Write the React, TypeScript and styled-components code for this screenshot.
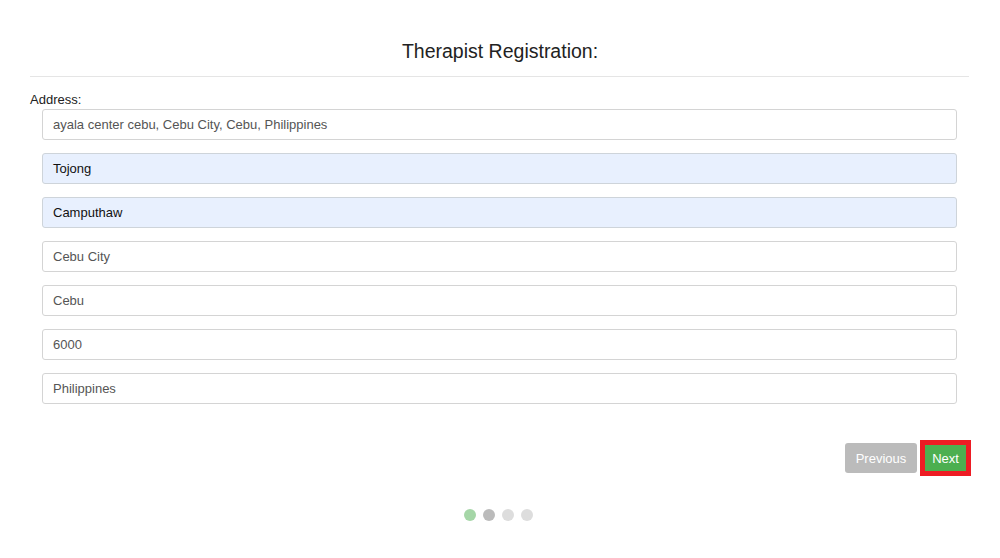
import React from "react";
import styled, { createGlobalStyle } from "styled-components";

const Global = createGlobalStyle`
  html, body { margin: 0; padding: 0; background: #fff; }
  body { font-family: "Liberation Sans", Arial, sans-serif; color: #222; }
  * { box-sizing: border-box; }
`;

const Page = styled.div`
  width: 1000px;
  height: 558px;
  padding: 38px 31px 0 30px;
  display: flex;
  flex-direction: column;
`;

const Title = styled.h1`
  margin: 0;
  font-size: 19.5px;
  font-weight: normal;
  text-align: center;
  color: #222;
  line-height: 26px;
  padding-left: 1px;
`;

const Rule = styled.div`
  height: 1px;
  background: #e5e5e5;
  margin-top: 12px;
`;

const Label = styled.div`
  font-size: 13px;
  margin-top: 14px;
  line-height: 17px;
  color: #222;
`;

const Fields = styled.div`
  display: flex;
  flex-direction: column;
  gap: 13px;
  padding: 0 12px;
  margin-top: 1px;
`;

const Field = styled.div<{ $filled?: boolean }>`
  height: 31px;
  border: 1px solid ${(p) => (p.$filled ? "#ced4da" : "#d4d4d4")};
  border-radius: 3px;
  background: ${(p) => (p.$filled ? "#e8f0fe" : "#fff")};
  padding: 0 10px;
  display: flex;
  align-items: center;
  font-size: 13px;
  color: ${(p) => (p.$filled ? "#111" : "#555")};
`;

const Actions = styled.div`
  display: flex;
  justify-content: flex-end;
  align-items: center;
  gap: 3px;
  margin-top: 36px;
  margin-right: -2px;
`;

const Button = styled.button<{ $variant: "prev" | "next" }>`
  font-family: "Liberation Sans", Arial, sans-serif;
  font-size: 13px;
  color: #fff;
  cursor: pointer;
  ${(p) =>
    p.$variant === "prev"
      ? `
    background: #bbbbbb;
    border: none;
    border-radius: 3px;
    width: 72px;
    height: 30px;
  `
      : `
    background: #4caf50;
    border: 5px solid #ed1c24;
    border-radius: 0;
    width: 51px;
    height: 36px;
    padding: 0;
  `}
`;

const Dots = styled.div`
  display: flex;
  justify-content: center;
  gap: 7px;
  margin-top: 33px;
  padding-right: 2px;
`;

const Dot = styled.span<{ $color: string }>`
  width: 12px;
  height: 12px;
  border-radius: 50%;
  background: ${(p) => p.$color};
`;

const fields: { value: string; filled?: boolean }[] = [
  { value: "ayala center cebu, Cebu City, Cebu, Philippines" },
  { value: "Tojong", filled: true },
  { value: "Camputhaw", filled: true },
  { value: "Cebu City" },
  { value: "Cebu" },
  { value: "6000" },
  { value: "Philippines" },
];

export default function App() {
  return (
    <>
      <Global />
      <Page>
        <Title>Therapist Registration:</Title>
        <Rule />
        <Label>Address:</Label>
        <Fields>
          {fields.map((f, i) => (
            <Field key={i} $filled={f.filled}>
              {f.value}
            </Field>
          ))}
        </Fields>
        <Actions>
          <Button $variant="prev">Previous</Button>
          <Button $variant="next">Next</Button>
        </Actions>
        <Dots>
          <Dot $color="#a5d6a7" />
          <Dot $color="#bbbbbb" />
          <Dot $color="#dddddd" />
          <Dot $color="#dddddd" />
        </Dots>
      </Page>
    </>
  );
}
